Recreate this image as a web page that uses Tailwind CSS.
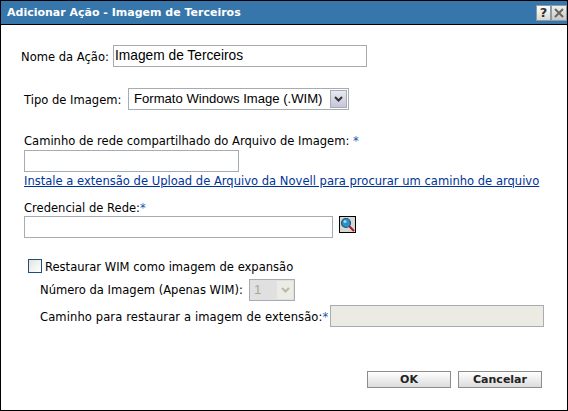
<!DOCTYPE html>
<html lang="en">
<head>
  <meta charset="UTF-8">
  <title>Adicionar Ação - Imagem de Terceiros</title>
  <script src="https://cdn.jsdelivr.net/npm/@tailwindcss/browser@4"></script>
</head>
<body class="bg-white">
  <div class="w-[568px] h-[411px] border border-black flex flex-col overflow-hidden bg-white text-black font-['DejaVu_Sans',sans-serif] text-[11.55px] leading-[14px] whitespace-nowrap">
    <!-- Title bar -->
    <div class="h-[24px] shrink-0 bg-[#3676ab] border-b-[1px] border-black flex items-center justify-between pl-[6px]">
      <span class="text-white font-bold text-[11px]">Adicionar Ação - Imagem de Terceiros</span>
      <div class="flex h-[16px] self-start mt-[4px]">
        <span class="w-[15px] h-[16px] flex items-center justify-center bg-gradient-to-b from-white to-[#d8d8d0] border border-[#8a9aa8] font-bold text-[13px] text-[#333]">?</span>
        <span class="w-[16px] h-[16px] flex items-center justify-center bg-gradient-to-b from-[#f0f0ea] to-[#c8c8c0] border border-[#8a9aa8]">
          <svg width="10" height="10" viewBox="0 0 10 10"><path d="M1 1L9 9M9 1L1 9" stroke="#666" stroke-width="2"/></svg>
        </span>
      </div>
    </div>

    <div class="flex-1 flex flex-col">
      <!-- Nome da Acao -->
      <div class="flex items-center ml-[20px] mt-[20px] h-[22px]">
        <label class="w-[92px] pt-[1px]">Nome da Ação:</label>
        <div class="w-[254px] h-[22px] border border-[#a5acb2] pl-[1px] font-['Liberation_Sans',sans-serif] text-[13.75px] leading-[19px]">Imagem de Terceiros</div>
      </div>

      <!-- Tipo de Imagem -->
      <div class="flex items-center ml-[23px] mt-[21px] h-[22px]">
        <label class="w-[104px] pt-[1px]">Tipo de Imagem:</label>
        <div class="w-[221px] h-[22px] border border-[#a5acb2] flex items-center justify-between pl-[5px] pr-[1px] font-['Liberation_Sans',sans-serif] text-[13.1px]">
          <span>Formato Windows Image (.WIM)</span>
          <span class="w-[17px] h-[18px] bg-gradient-to-b from-[#e8e8f0] to-[#c4c6da] border border-[#a5acb2] flex items-center justify-center">
            <svg width="9" height="6" viewBox="0 0 9 6"><path d="M1 1L4.5 4.5L8 1" fill="none" stroke="#333" stroke-width="2"/></svg>
          </span>
        </div>
      </div>

      <!-- Caminho de rede -->
      <div class="ml-[23px] mt-[24px]">
        <label class="block h-[15px]">Caminho de rede compartilhado do Arquivo de Imagem: <span class="text-[#1a56b0]">*</span></label>
        <div class="w-[215px] h-[22px] mt-[1px] border border-[#a5acb2]"></div>
        <a class="block mt-[2px] text-[#003399] underline">Instale a extensão de Upload de Arquivo da Novell para procurar um caminho de arquivo</a>
      </div>

      <!-- Credencial de Rede -->
      <div class="ml-[23px] mt-[12px]">
        <label class="block h-[15px] pt-[1px]">Credencial de Rede:<span class="text-[#1a56b0]">*</span></label>
        <div class="flex items-start mt-[1px]">
          <div class="w-[309px] h-[22px] border border-[#a5acb2]"></div>
          <span class="w-[17px] h-[17px] ml-[6px] bg-[#d8d8d0] border border-black flex items-center justify-center">
            <svg width="15" height="15" viewBox="0 0 15 15">
              <path d="M9 9L14 14" stroke="#b01030" stroke-width="2"/>
              <circle cx="6" cy="6" r="4.5" fill="#2f8fc8" stroke="#1d5a80" stroke-width="1.2"/>
              <circle cx="5" cy="4.5" r="1.5" fill="#9fd8f0"/>
            </svg>
          </span>
        </div>
      </div>

      <!-- Restaurar WIM -->
      <div class="ml-[27px] mt-[21px] flex items-center h-[14px]">
        <span class="w-[14px] h-[14px] border border-[#1d4f7c] bg-gradient-to-br from-[#e4e4dc] to-white"></span>
        <span class="ml-[3px] pt-[1px]">Restaurar WIM como imagem de expansão</span>
      </div>
      <div class="ml-[39px] mt-[6px] flex items-center h-[22px]">
        <label class="w-[209px]">Número da Imagem (Apenas WIM):</label>
        <div class="w-[46px] h-[22px] border border-[#a5acb2] bg-[#e0e0e0] flex items-center justify-between pl-[4px] pr-[1px] font-['Liberation_Sans',sans-serif] text-[13.33px] text-[#a8a898]">
          <span>1</span>
          <span class="w-[16px] h-[18px] bg-[#ecece4] flex items-center justify-center">
            <svg width="9" height="6" viewBox="0 0 9 6"><path d="M1 1L4.5 4.5L8 1" fill="none" stroke="#b8b8b0" stroke-width="2"/></svg>
          </span>
        </div>
      </div>
      <div class="ml-[39px] mt-[4px] flex items-center h-[22px]">
        <label class="w-[290px] pt-[1px] tracking-[0.1px]">Caminho para restaurar a imagem de extensão:<span class="text-[#1a56b0]">*</span></label>
        <div class="w-[214px] h-[22px] border border-[#a5acb2] bg-[#ebebe4]"></div>
      </div>

      <!-- Buttons -->
      <div class="flex gap-[7px] ml-[366px] mt-[44px]">
        <button class="w-[84px] h-[17px] border border-[#8c8c8c] bg-gradient-to-b from-white to-[#dcdcdc] font-bold text-[11px] leading-[14px] text-[#222]">OK</button>
        <button class="w-[84px] h-[17px] border border-[#8c8c8c] bg-gradient-to-b from-white to-[#dcdcdc] font-bold text-[11px] leading-[14px] text-[#222]">Cancelar</button>
      </div>
    </div>
  </div>
</body>
</html>
